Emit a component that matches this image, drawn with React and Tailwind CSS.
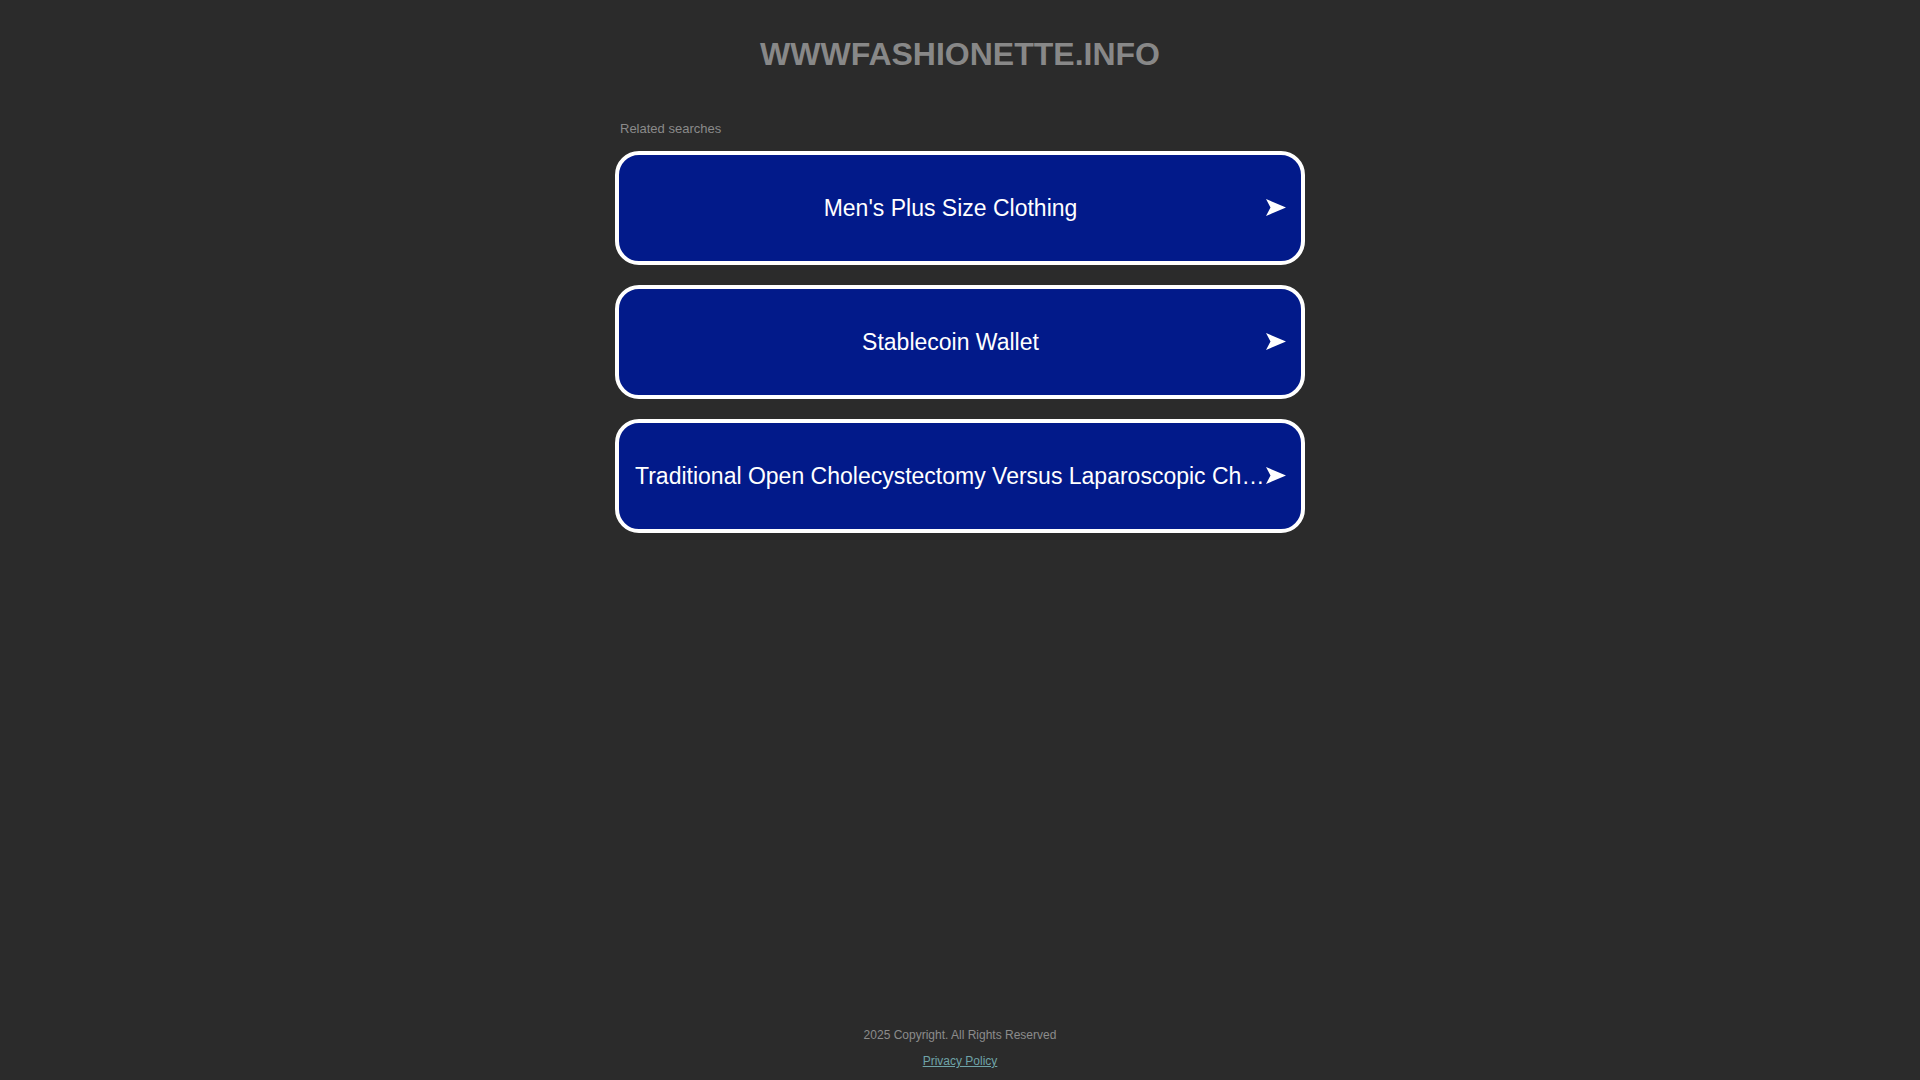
import React from "react";

const items = [
  "Men's Plus Size Clothing",
  "Stablecoin Wallet",
  "Traditional Open Cholecystectomy Versus Laparoscopic Cholecystectomy",
];

function Arrow() {
  return (
    <svg width="20" height="17" viewBox="0 0 20 17" className="shrink-0">
      <polygon points="0,0 20,8.5 0,17 4.5,8.5" fill="#ffffff" />
    </svg>
  );
}

export default function App() {
  return (
    <div className="min-h-screen bg-[#2b2b2b] flex flex-col font-['Liberation_Sans',Arial,sans-serif]">
      <h1 className="pt-[36px] text-center text-[32px] leading-[36px] font-bold text-[#888888]">
        WWWFASHIONETTE.INFO
      </h1>
      <div className="mx-auto w-[690px] mt-[49px]">
        <div className="pl-[5px] text-[13px] leading-[15px] text-[#8a8a8a]">Related searches</div>
        <div className="mt-[14.5px] flex flex-col gap-[20px]">
          {items.map((t) => (
            <a
              key={t}
              href="#"
              className="flex items-center h-[114px] rounded-[24px] border-4 border-white bg-[#021a8a] pl-[16px] pr-[15px] text-white"
            >
              <span className="flex-1 min-w-0 truncate text-center text-[23px] leading-[28px]">{t}</span>
              <Arrow />
            </a>
          ))}
        </div>
      </div>
      <footer className="mt-auto pb-[12px] flex flex-col items-center gap-[12px] text-[12px] leading-[14px]">
        <div className="text-[#8c8c8c]">2025 Copyright. All Rights Reserved</div>
        <a href="#" className="text-[#6fa3a8] underline">Privacy Policy</a>
      </footer>
    </div>
  );
}
